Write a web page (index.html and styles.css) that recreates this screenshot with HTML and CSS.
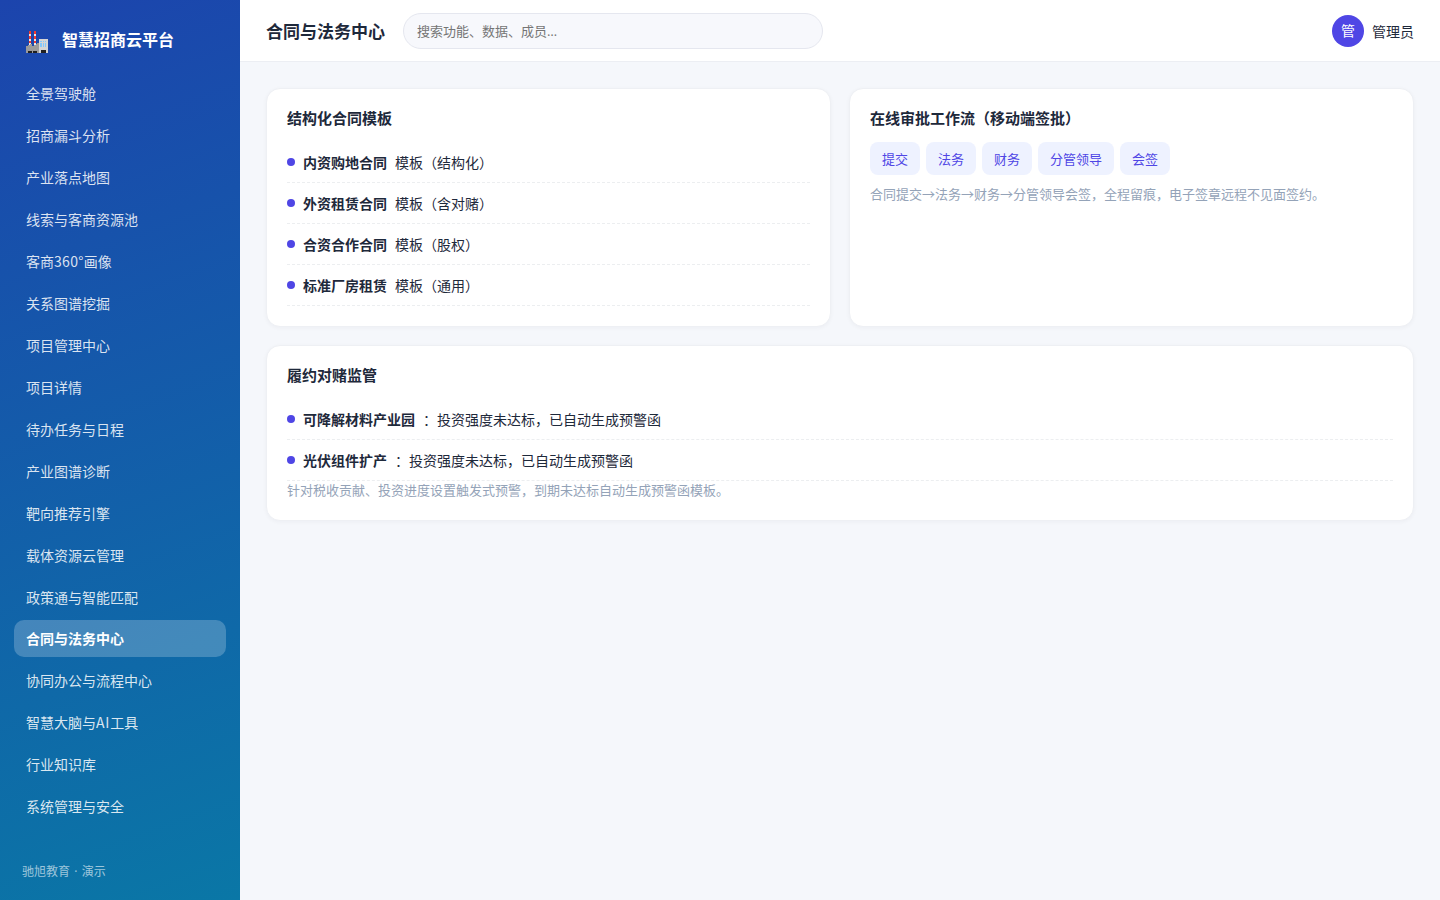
FILE: index.html
```html
<!DOCTYPE html>
<html lang="zh-CN">
<head>
<meta charset="utf-8">
<title>合同与法务中心</title>
<link rel="stylesheet" href="styles.css">
</head>
<body>
<div class="app">
  <aside class="sidebar">
    <div class="brand">
      <svg class="logo" width="22" height="22" viewBox="0 0 22 22" shape-rendering="crispEdges">
        <path fill="#e8e8e8" d="M3 0h2v14H3zM8 0h2v14H8z"/>
        <path fill="#f03a30" d="M3 0h2v3H3zM3 5h2v3H3zM3 10h2v2H3zM8 0h2v3H8zM8 5h2v3H8zM8 10h2v2H8z"/>
        <path fill="#9b9b9b" d="M0 15h2v-1h2v-1h2v2h2v-1h2v-1h1v-1h2v10H0z"/>
        <path fill="#d5d5d5" d="M13 8h9v14h-9z"/>
        <path fill="#83c7fb" d="M14 10h2v1h-2zM17 10h1v1h-1zM19 10h1v1h-1zM14 12h2v4h-2zM17 12h1v4h-1zM19 12h1v4h-1z"/>
        <path fill="#202020" d="M2 20h4v2H2zM7 20h4v2H7zM15 19h5v3h-5z"/>
      </svg>
      <span>智慧招商云平台</span>
    </div>
    <nav class="nav">
      <a>全景驾驶舱</a>
      <a>招商漏斗分析</a>
      <a>产业落点地图</a>
      <a>线索与客商资源池</a>
      <a>客商<span class="num">360°</span>画像</a>
      <a>关系图谱挖掘</a>
      <a>项目管理中心</a>
      <a>项目详情</a>
      <a>待办任务与日程</a>
      <a>产业图谱诊断</a>
      <a>靶向推荐引擎</a>
      <a>载体资源云管理</a>
      <a>政策通与智能匹配</a>
      <a class="active">合同与法务中心</a>
      <a>协同办公与流程中心</a>
      <a>智慧大脑与<span class="latin">AI</span>工具</a>
      <a>行业知识库</a>
      <a>系统管理与安全</a>
    </nav>
    <div class="foot">驰旭教育 · 演示</div>
  </aside>
  <div class="main">
    <header class="topbar">
      <h1>合同与法务中心</h1>
      <input class="search" placeholder="搜索功能、数据、成员…">
      <div class="user"><span class="avatar">管</span><span>管理员</span></div>
    </header>
    <main class="content">
      <section class="card">
        <h3>结构化合同模板</h3>
        <ul class="list">
          <li><i class="dot"></i><b>内资购地合同</b><span>模板（结构化）</span></li>
          <li><i class="dot"></i><b>外资租赁合同</b><span>模板（含对赌）</span></li>
          <li><i class="dot"></i><b>合资合作合同</b><span>模板（股权）</span></li>
          <li><i class="dot"></i><b>标准厂房租赁</b><span>模板（通用）</span></li>
        </ul>
      </section>
      <section class="card">
        <h3>在线审批工作流（移动端签批）</h3>
        <div class="steps">
          <span>提交</span><span>法务</span><span>财务</span><span>分管领导</span><span>会签</span>
        </div>
        <p class="hint steps-hint">合同提交→法务→财务→分管领导会签，全程留痕，电子签章远程不见面签约。</p>
      </section>
      <section class="card wide">
        <h3>履约对赌监管</h3>
        <ul class="list">
          <li><i class="dot"></i><b>可降解材料产业园</b><span>：投资强度未达标，已自动生成预警函</span></li>
          <li><i class="dot"></i><b>光伏组件扩产</b><span>：投资强度未达标，已自动生成预警函</span></li>
        </ul>
        <p class="hint">针对税收贡献、投资进度设置触发式预警，到期未达标自动生成预警函模板。</p>
      </section>
    </main>
  </div>
</div>
</body>
</html>
```

FILE: styles.css
```css
* { box-sizing: border-box; margin: 0; padding: 0; }
body {
  font-family: "Noto Sans CJK SC", sans-serif;
  font-size: 14px;
  line-height: 20px;
  color: #1e293b;
  background: #f5f7fb;
}
.app { display: flex; height: 100vh; overflow: hidden; }
.sidebar {
  width: 240px;
  flex: none;
  display: flex;
  flex-direction: column;
  padding: 22px 14px 18px;
  color: #fff;
  background: linear-gradient(160deg, #1c44ad, #0a77a6);
}
.brand {
  display: flex;
  align-items: center;
  gap: 14px;
  height: 36px;
  padding: 0 12px 2px;
  font-size: 16px;
  font-weight: 700;
}
.logo { margin-top: 6px; }
.nav { display: flex; flex-direction: column; gap: 4.94px; padding-top: 17.25px; }
.nav a {
  height: 37px;
  line-height: 37px;
  padding: 0 12px;
  border-radius: 10px;
  color: rgba(255, 255, 255, .85);
}
.nav .active { background: rgba(255, 255, 255, .22); color: #fff; font-weight: 700; }
.num { letter-spacing: .3px; }
.latin { letter-spacing: .8px; }
.foot {
  margin-top: auto;
  padding-left: 8px;
  font-family: "Open Sans", "Noto Sans CJK SC", sans-serif;
  font-size: 12px;
  color: rgba(255, 255, 255, .6);
  word-spacing: 1.2px;
}
.main { flex: 1; min-width: 0; }
.topbar {
  display: flex;
  align-items: center;
  gap: 18px;
  height: 62px;
  padding: 0 26px;
  background: #fff;
  border-bottom: 1px solid #eceef3;
}
.topbar h1 { font-size: 17px; font-weight: 700; }
.search {
  width: 420px;
  height: 36px;
  padding: 0 13px;
  border: 1px solid #e5e7ef;
  border-radius: 18px;
  background: #f7f8fc;
  font-family: "Open Sans", "Noto Sans CJK SC", sans-serif;
  font-size: 13px;
}
.search::placeholder { color: #757575; }
.user { display: flex; align-items: center; gap: 8px; margin-left: auto; }
.avatar {
  width: 32px;
  height: 32px;
  line-height: 31px;
  border-radius: 50%;
  text-align: center;
  color: #fff;
  background: #4f46e5;
}
.content { display: grid; grid-template-columns: 1fr 1fr; gap: 18px; padding: 26px; }
.card {
  padding: 19px 20px 20px;
  border: 1px solid #eef0f4;
  border-radius: 14px;
  background: #fff;
  box-shadow: 0 1px 4px rgba(15, 23, 42, .04);
}
.wide { grid-column: 1 / -1; }
.card h3 { font-size: 15px; font-weight: 700; line-height: 20px; margin-bottom: 14px; }
.list { list-style: none; }
.list li {
  display: flex;
  align-items: center;
  gap: 8px;
  height: 41px;
  padding-bottom: 1px;
  border-bottom: 1px dashed #eceef0;
}
.dot { width: 8px; height: 8px; border-radius: 50%; background: #4f46e5; }
.steps { display: flex; gap: 6px; }
.steps span {
  height: 33px;
  line-height: 33px;
  padding: 0 12px;
  border-radius: 8px;
  font-size: 13px;
  color: #4f46e5;
  background: #eef2ff;
}
.hint { font-size: 13px; line-height: 18px; color: #94a3b8; padding-bottom: 1px; }
.steps-hint { margin-top: 10px; }
```
